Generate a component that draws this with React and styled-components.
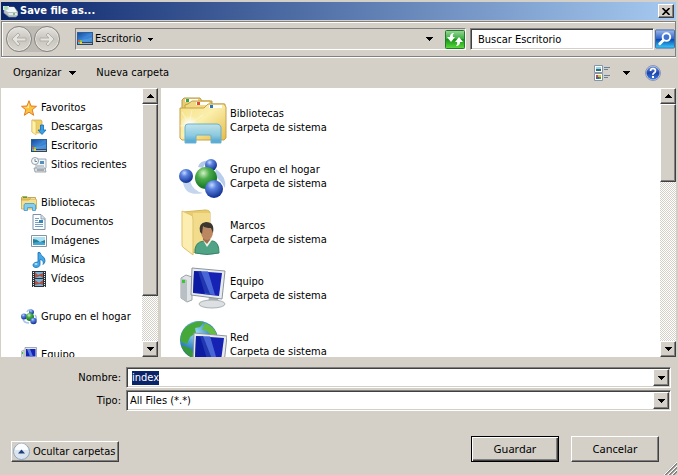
import React, { useEffect, useRef } from 'react';
import styled, { createGlobalStyle, css } from 'styled-components';

const GlobalStyle = createGlobalStyle`
  * {
    box-sizing: border-box;
  }
  body {
    margin: 0;
    background: #d4d0c8;
  }
  body,
  button,
  input,
  select {
    font-family: 'DejaVu Sans Condensed', 'Noto Sans', sans-serif;
    font-size: 11px;
    line-height: 14px;
    color: #000000;
  }
  svg {
    display: block;
    flex: none;
  }
`;

const raised = css`
  border: 1px solid;
  border-color: #ffffff #404040 #404040 #ffffff;
  box-shadow: inset -1px -1px #808080;
  background: #d4d0c8;
`;

const sunken = css`
  border: 1px solid;
  border-color: #808080 #ffffff #ffffff #808080;
  box-shadow: inset 1px 1px #404040, inset -1px -1px #d4d0c8;
  background: #ffffff;
`;

const Dialog = styled.div`
  display: flex;
  flex-direction: column;
  height: 100vh;
  min-height: 320px;
  padding: 2px 2px 0 1px;
  background: #d4d0c8;
`;

const TitleBar = styled.header`
  display: flex;
  align-items: center;
  gap: 2px;
  height: 18px;
  padding: 0 2px 0 1px;
  background: linear-gradient(to right, #0a246a, #a6caf0);

  h1 {
    flex: 1;
    margin: 0;
    color: #ffffff;
    font-size: 11px;
    font-weight: bold;
  }
`;

const CloseButton = styled.button`
  ${raised}
  display: flex;
  align-items: center;
  justify-content: center;
  width: 16px;
  height: 14px;
  padding: 0;
`;

const NavBar = styled.nav`
  display: flex;
  align-items: center;
  height: 36px;
  margin-top: 1px;
  padding-left: 4px;
  border: 1px solid #808080;
  box-shadow: inset 1px 1px #ffffff, 0 1px #ffffff;
`;

const HistoryButtons = styled.div`
  display: flex;
  gap: 2px;
  margin-right: 15px;
  border-radius: 13px;
  background: #bebbb5;
`;

const RoundButton = styled.button`
  width: 26px;
  height: 26px;
  padding: 0;
  border: 1px solid #85837f;
  border-radius: 50%;
  background: linear-gradient(#e6e4df, #c8c5bf 50%, #dad7d0);
  box-shadow: inset 0 0 0 1px #e8e6e2;
`;

const AddressBar = styled.div`
  display: flex;
  flex: 1;
  align-items: center;
  height: 22px;
  padding-left: 1px;
  border: 1px solid;
  border-color: #808080 #ffffff #ffffff #808080;
`;

const PlainButton = styled.button`
  display: flex;
  align-items: center;
  gap: ${({ $gap }) => $gap || 0}px;
  padding: 0;
  border: 0;
  background: none;
`;

const Spacer = styled.div`
  flex: 1;
`;

const RefreshButton = styled(PlainButton)`
  margin-left: 12px;
`;

const SearchBox = styled.form`
  display: flex;
  align-items: center;
  gap: 1px;
  width: 205px;
  margin-left: 4px;

  input {
    flex: 1;
    min-width: 0;
    height: 22px;
    padding: 0 7px;
    ${sunken}
  }
  input::placeholder {
    color: #000000;
  }
`;

const Toolbar = styled.div`
  display: flex;
  align-items: center;
  height: 31px;
  padding: 0 15px 0 12px;
`;

const MainCommands = styled.div`
  display: flex;
  flex: 1;
  gap: 20px;
`;

const ViewCommands = styled.div`
  display: flex;
  align-items: center;
  gap: 15px;
`;

const Panes = styled.div`
  display: flex;
  flex: 1;
  gap: 3px;
  min-height: 0;
`;

const Pane = styled.section`
  display: flex;
  flex: ${({ $width }) => ($width ? `0 0 ${$width}px` : 1)};
  min-width: 0;
  background: #ffffff;
`;

const Tree = styled.ul`
  flex: 1;
  margin: 0;
  padding: 10px 0 0 20px;
  overflow: hidden;
  list-style: none;

  ul {
    margin: 0;
    padding: 0 0 0 10px;
    list-style: none;
  }
  > li {
    margin-bottom: 19px;
  }
`;

const TreeLink = styled.a`
  display: flex;
  align-items: center;
  gap: 4px;
  height: 19px;
  color: #000000;
  text-decoration: none;
  white-space: nowrap;
`;

const FileList = styled.ul`
  flex: 1;
  margin: 0;
  padding: 4px 0 0 18px;
  overflow: hidden;
  list-style: none;
`;

const FileItem = styled.li`
  display: flex;
  align-items: center;
  gap: 3px;
  height: 56px;
`;

const FileText = styled.div`
  padding-top: 2px;

  p {
    margin: 0;
  }
`;

const ScrollBar = styled.div`
  display: flex;
  flex-direction: column;
  width: 16px;
  background: repeating-conic-gradient(#ffffff 0 25%, #d4d0c8 0 50%) 0 0 / 2px 2px;
`;

const ArrowButton = styled.button`
  ${raised}
  display: flex;
  flex: none;
  align-items: center;
  justify-content: center;
  width: 16px;
  height: 16px;
  padding: 0;
`;

const Track = styled.div`
  flex: 1;
`;

const Thumb = styled.div`
  ${raised}
  height: ${({ $shown }) => $shown}%;
`;

const Fields = styled.form`
  display: grid;
  grid-template-columns: 120px 1fr;
  gap: 2px 5px;
  align-items: center;
  padding: 10px 5px 0 0;

  label {
    padding-top: 1px;
    text-align: right;
  }
`;

const ComboBox = styled.div`
  ${sunken}
  display: flex;
  height: 21px;
  padding: 1px;

  input,
  select {
    flex: 1;
    min-width: 0;
    padding: 0 0 0 4px;
    border: 0;
    outline: 0;
    background: none;
    appearance: none;
  }
  select {
    padding: 1px 0 0 2px;
  }
  input::selection {
    background: #0a246a;
    color: #ffffff;
  }
`;

const DropArrow = styled.span`
  ${raised}
  display: flex;
  align-items: center;
  justify-content: center;
  width: 16px;
  pointer-events: none;
`;

const Footer = styled.footer`
  display: flex;
  align-items: flex-end;
  gap: 12px;
  height: 64px;
  padding: 0 17px 13px 10px;
  position: relative;
`;

const HideButton = styled.button`
  ${raised}
  display: flex;
  align-items: center;
  gap: 3px;
  height: 21px;
  padding: 0 3px 0 1px;
`;

const ActionButton = styled.button`
  ${raised}
  width: 88px;
  height: 26px;
  padding: 0;
  font-family: 'Noto Sans', sans-serif;
  ${({ $primary }) =>
    $primary &&
    css`
      border-color: #000000;
      box-shadow: inset 1px 1px #ffffff, inset -1px -1px #404040, inset -2px -2px #808080;
    `}
`;

const Grip = styled.svg`
  position: absolute;
  right: -1px;
  bottom: 0;
`;

const Triangle = ({ up, small }) => (
  <svg width={small ? 5 : 7} height={small ? 3 : 4} viewBox="0 0 7 4" shapeRendering="crispEdges">
    <path d={up ? 'M0 4 3.5 0 7 4z' : 'M0 0h7L3.5 4z'} />
  </svg>
);

const BackArrow = ({ flip }) => (
  <svg width="24" height="24" viewBox="0 0 24 24">
    <path
      d="M5 12l6-6 2 2-3 3h9v3h-9l3 3-2 2z"
      transform={flip ? 'matrix(-1 0 0 1 24 0)' : undefined}
      fill="#e6e4df"
      stroke="#b2afa9"
      strokeWidth="1"
    />
  </svg>
);

const DriveIcon = () => (
  <svg width="16" height="16" viewBox="0 0 16 16">
    <path d="M2 6 5 4h7l4 5v3l-2 2H7L2 10z" fill="#b9c1c8" stroke="#87929b" strokeWidth=".6" />
    <path d="M2 6 5 4h7l3 5H6z" fill="#f2f5f7" />
    <path d="M6 10h9v2H7z" fill="#e4e8eb" />
    <path d="M1 3h6v4H1z" fill="#cfe8f3" />
    <circle cx="4" cy="5" r="2" fill="#a9d7a1" />
    <circle cx="12" cy="11" r="1" fill="#54b34b" />
  </svg>
);

const DesktopIcon = () => (
  <svg width="16" height="16" viewBox="0 0 16 16">
    <defs>
      <linearGradient id="desk" x2="1" y2="1">
        <stop offset="0" stopColor="#174da0" />
        <stop offset=".55" stopColor="#3f87d8" />
        <stop offset="1" stopColor="#2a66b8" />
      </linearGradient>
    </defs>
    <path d="M0 1h16v13H0z" fill="#2c5f9e" />
    <path d="M1 2h14v9H1z" fill="url(#desk)" />
    <path d="M1 9q7 1 14-3v5H1z" fill="#5ba6ea" opacity=".6" />
    <path d="M0 11h16v3H0z" fill="#33475c" />
    <path d="M5 12h10v1H5z" fill="#9fb0c0" />
    <path d="M1 9h2v2H1z" fill="#f05a28" />
    <path d="M3 9h2v2H3z" fill="#79c64b" />
    <path d="M1 11h2v2H1z" fill="#45b9ec" />
    <path d="M3 11h2v2H3z" fill="#f6cc3c" />
  </svg>
);

const RefreshIcon = () => (
  <svg width="20" height="19" viewBox="0 0 20 19">
    <defs>
      <linearGradient id="refresh" x2="0" y2="1">
        <stop offset="0" stopColor="#9ad79a" />
        <stop offset=".45" stopColor="#3fae41" />
        <stop offset=".5" stopColor="#159419" />
        <stop offset="1" stopColor="#5edc3d" />
      </linearGradient>
    </defs>
    <rect x=".5" y=".5" width="19" height="18" rx="1" fill="url(#refresh)" stroke="#237a2a" />
    <path d="M9 3Q5 3 5 7H2l4 5 4-5H8q-1-2 1-4z" fill="#ffffff" />
    <path d="M11 16q4 0 4-4h3l-4-5-4 5h2q1 2-1 4z" fill="#ffffff" />
  </svg>
);

const SearchIcon = () => (
  <svg width="20" height="20" viewBox="0 0 21 20">
    <defs>
      <linearGradient id="search" x2="0" y2="1">
        <stop offset="0" stopColor="#9fb9ea" />
        <stop offset=".48" stopColor="#3265c9" />
        <stop offset=".5" stopColor="#0b43ad" />
        <stop offset="1" stopColor="#35d0fb" />
      </linearGradient>
    </defs>
    <rect x=".5" y=".5" width="20" height="19" rx="1" fill="url(#search)" stroke="#3b68b4" />
    <path d="M9 11l-4 4" stroke="#ffffff" strokeWidth="3" strokeLinecap="round" />
    <circle cx="12" cy="8" r="4" fill="#3f74d3" stroke="#ffffff" strokeWidth="2" />
  </svg>
);

const ViewIcon = () => (
  <svg width="17" height="16" viewBox="0 0 17 16">
    <path d="M.5.5h8v7h-8zM.5 8.500h8v7h-8z" fill="#ffffff" stroke="#8395a8" />
    <path d="M2 2h5v2H2z" fill="#9bd4ee" />
    <path d="M2 4h5v2H2z" fill="#2a6f70" />
    <path d="M2 10h2v2H2z" fill="#d7432d" />
    <path d="M4 10h3v2H4z" fill="#eebb25" />
    <path d="M2 12h3v2H2z" fill="#3262ba" />
    <path d="M5 12h2v2H5z" fill="#36a541" />
    <path d="M10 2.500h6M10 4.500h4M10 10.500h6M10 12.500h4" stroke="#6780a0" />
  </svg>
);

const HelpIcon = () => (
  <svg width="16" height="16" viewBox="0 0 16 16">
    <defs>
      <linearGradient id="help" x2="0" y2="1">
        <stop offset="0" stopColor="#6f92e0" />
        <stop offset=".5" stopColor="#1c43ac" />
        <stop offset="1" stopColor="#3e7be0" />
      </linearGradient>
    </defs>
    <circle cx="8" cy="8" r="7.500" fill="#c3cde2" stroke="#8a97b0" />
    <circle cx="8" cy="8" r="6.500" fill="url(#help)" />
    <path d="M5.500 6q0-2.500 2.500-2.500T10.500 6q0 1-1.500 2T8 10" fill="none" stroke="#ffffff" strokeWidth="1.600" />
    <path d="M7 11h2v2H7z" fill="#ffffff" />
  </svg>
);

const StarIcon = () => (
  <svg width="16" height="16" viewBox="0 0 16 16">
    <path d="M8 .7 10 6l5.500.3-4.300 3.500 1.500 5.500L8 12.200l-4.700 3.100 1.500-5.500L.5 6.300 6 6z" fill="#fbc344" stroke="#e47d22" />
    <path d="M8 3v5L3 7.200l3.500-.3z" fill="#fff0a5" />
  </svg>
);

const DownloadsIcon = () => (
  <svg width="16" height="16" viewBox="0 0 16 16">
    <path d="M1 1h9l1 1v12H3l-2-1z" fill="#edd06a" stroke="#d1a844" strokeWidth=".7" />
    <path d="M1 1l4 2v13l-4-3z" fill="#fff1a8" stroke="#d9b650" strokeWidth=".6" />
    <path d="M9.500 6h3v5H15l-4 4.500L7 11h2.500z" fill="#36a1ea" stroke="#1769ad" strokeWidth=".8" />
  </svg>
);

const RecentIcon = () => (
  <svg width="16" height="16" viewBox="0 0 16 16">
    <path d="M5 2h10v9l-1 1H5z" fill="#f0f4f7" stroke="#8698a8" strokeWidth=".8" />
    <path d="M9 4h4v3H9z" fill="#5590bd" />
    <path d="M6 9h7" stroke="#8aa0b1" />
    <path d="M3 11h11l1 4H4z" fill="#dbe0e3" stroke="#8d979f" strokeWidth=".8" />
    <path d="M6 13h7" stroke="#6b7880" />
    <circle cx="4" cy="4" r="3.500" fill="#f7f9fa" stroke="#7b8f9f" strokeWidth=".8" />
    <path d="M4 2v2.500h2" fill="none" stroke="#5a6c7a" strokeWidth=".8" />
  </svg>
);

const LibrarySmallIcon = () => (
  <svg width="16" height="16" viewBox="0 0 16 16">
    <path d="M.5 4V2.500l1-1H6l1 1h7.500V6H.5z" fill="#e3c463" stroke="#b8983f" strokeWidth=".8" />
    <path d="M2 2h4v1H2z" fill="#3fa358" />
    <path d="M10 3h4v1h-4z" fill="#ffffff" />
    <path d="M.5 5h7.500l1-1h6l.5 1v9H.5z" fill="#f6e08d" stroke="#cda648" strokeWidth=".8" />
    <path d="M3 15.500V10l1-1.500h9l1.500 1.500v5.500h-3V12.500h-5v3z" fill="#86cdec" stroke="#3f98ca" strokeWidth=".8" />
  </svg>
);

const LibraryIcon = () => (
  <svg width="48" height="48" viewBox="0 0 48 48">
    <defs>
      <linearGradient id="folder" x2="1" y2="1">
        <stop offset="0" stopColor="#f3df83" />
        <stop offset=".45" stopColor="#fbefad" />
        <stop offset="1" stopColor="#e3bd4b" />
      </linearGradient>
      <linearGradient id="stand" x2="0" y2="1">
        <stop offset="0" stopColor="#bfe3ee" />
        <stop offset=".6" stopColor="#83c9e9" />
        <stop offset="1" stopColor="#3e9bd2" />
      </linearGradient>
      <radialGradient id="flare">
        <stop offset="0" stopColor="#ffffff" />
        <stop offset="1" stopColor="#ffffff" stopOpacity="0" />
      </radialGradient>
    </defs>
    <path d="M3 12V4l2-2h16l2 3h10v9H3z" fill="#e8cc73" stroke="#b99b49" />
    <path d="M6 3h13v3H6z" fill="#ffffff" />
    <path d="M7 3h3v3H7z" fill="#30a354" />
    <path d="M6 15V9l3-1 4-3h18l2 3h13v9H6z" fill="#f0d980" stroke="#c0a14c" />
    <path d="M17 6h13v3H17z" fill="#ffffff" />
    <path d="M18 6h3v3h-3z" fill="#e34a32" />
    <path d="M1 12h24l4-4h16l2 3v31l-2 2H3l-2-2z" fill="url(#folder)" stroke="#c7a24b" />
    <path d="M30 9h13v3H30z" fill="#ffffff" />
    <path d="M31 9h3v3h-3z" fill="#2878c8" />
    <circle cx="10" cy="28" r="9" fill="url(#flare)" />
    <path d="M10 28 3 16M10 28 13 14M10 28 1 30M10 28 24 19M10 28 4 41" stroke="#fffbe2" opacity=".6" />
    <path
      d="M6 31q0-3 3-3h29q3 0 4 3v16H32v-7q0-1-1-1H18q-1 0-1 1v7H6z"
      fill="url(#stand)"
      stroke="#5faed2"
      opacity=".92"
    />
  </svg>
);

const HomegroupSmallIcon = () => (
  <svg width="16" height="16" viewBox="0 0 16 16">
    <path d="M6 3q1-3 5-2M2 10q1 4 6 4M14 6q2 2 1 5" fill="none" stroke="#a9c4ea" strokeWidth="1.500" />
    <circle cx="10.500" cy="3" r="2.500" fill="url(#blueBall)" />
    <circle cx="3" cy="7.500" r="3" fill="url(#blueBall)" />
    <circle cx="9" cy="8" r="4" fill="url(#greenBall)" />
    <circle cx="12.500" cy="12" r="3.200" fill="url(#blueBall)" />
  </svg>
);

const HomegroupIcon = () => (
  <svg width="48" height="48" viewBox="0 0 48 48">
    <defs>
      <radialGradient id="blueBall" cx=".38" cy=".28" r=".7">
        <stop offset="0" stopColor="#c5d9ff" />
        <stop offset=".35" stopColor="#5c83df" />
        <stop offset="1" stopColor="#153495" />
      </radialGradient>
      <radialGradient id="greenBall" cx=".38" cy=".28" r=".7">
        <stop offset="0" stopColor="#d2f2c2" />
        <stop offset=".4" stopColor="#4bac4b" />
        <stop offset="1" stopColor="#127322" />
      </radialGradient>
    </defs>
    <g transform="translate(0 4)">
      <path d="M19 11q2-8 16-6-9 0-11 7z" fill="#b3c8e8" />
      <path d="M4 26q2 15 20 11-10-2-13-12z" fill="#c4d5ed" />
      <path d="M37 13q11 8 9 19-4-8-11-12z" fill="#b9cdec" />
      <circle cx="32" cy="9" r="6" fill="url(#blueBall)" />
      <circle cx="7" cy="20" r="7" fill="url(#blueBall)" />
      <circle cx="27" cy="22" r="11" fill="url(#greenBall)" />
      <circle cx="35" cy="33" r="9" fill="url(#blueBall)" />
    </g>
  </svg>
);

const UserIcon = () => (
  <svg width="48" height="48" viewBox="0 0 48 48">
    <path d="M4 4 26 2q5 0 5 3v36L13 45 4 39z" fill="#e9cb6b" stroke="#d3b75e" />
    <path d="M14 5h17v36H14z" fill="#f2dc8c" />
    <path d="M3 3l9 4q2 1 2 4v36L5 40q-2-1-2-3z" fill="#fcedb1" stroke="#dec36d" />
    <path d="M16 45q-1-11 9-12h9q6 1 6 12-12 3-24 0z" fill="#50a485" stroke="#388368" />
    <path d="M24 32l4 7 5-7" fill="#f2f4f0" />
    <path d="M24 27h7v5l-3 4-4-4z" fill="#a06f49" />
    <ellipse cx="28" cy="24" rx="6" ry="8" fill="#ba8760" />
    <path d="M21 24q-2-9 6-10 9 0 7 11l-2-5q-6 0-8-2l-1 8z" fill="#3c3630" />
  </svg>
);

const Screen = () => (
  <>
    <path d="M30 32l9 1 1 6-11-1z" fill="#a9b0b4" />
    <ellipse cx="33" cy="39" rx="13" ry="4" fill="#dce0e2" stroke="#aab0b4" />
    <path d="M13 3l33 3-3 28-31-4z" fill="#e8ebed" stroke="#8d969d" />
    <path d="M15 6l28 2-3 23-26-3z" fill="#1622b4" />
    <path d="M19 6h10l7 24-10-1z" fill="#5a7de2" opacity=".75" />
    <path d="M15 6h7l9 23-17-2z" fill="#071896" opacity=".6" />
  </>
);

const ComputerSmallIcon = () => (
  <svg width="16" height="16" viewBox="0 0 16 16">
    <path d="M.5 4 3 3v10l-2.500-1z" fill="#d5dade" stroke="#9ba3a8" strokeWidth=".6" />
    <path d="M1 5h1v2H1z" fill="#37ca30" />
    <path d="M4 .5h11.500v10H4z" fill="#e4e8eb" stroke="#8d969d" strokeWidth=".8" />
    <path d="M5 2h9.500v7.500H5z" fill="#1424b6" />
    <path d="M6 2h3l3 7.500H9z" fill="#5a7de2" />
    <path d="M7 12h6v2H7z" fill="#aab0b4" />
  </svg>
);

const ComputerIcon = () => (
  <svg width="48" height="48" viewBox="0 0 48 48">
    <g transform="translate(0 1)">
      <path d="M2 13l5-3 6 2v23l-5 2-6-4z" fill="#dfe3e5" stroke="#9ba3a8" />
      <path d="M2 13l6 2v22l-6-4z" fill="#b9c0c5" />
      <path d="M3 15h3v3H3z" fill="#37ca30" />
      <Screen />
    </g>
  </svg>
);

const NetworkIcon = () => (
  <svg width="48" height="48" viewBox="0 0 48 48">
    <defs>
      <radialGradient id="globe" cx=".4" cy=".3" r=".7">
        <stop offset="0" stopColor="#9edcf7" />
        <stop offset=".6" stopColor="#3587c9" />
        <stop offset="1" stopColor="#185694" />
      </radialGradient>
    </defs>
    <circle cx="20" cy="20" r="19" fill="url(#globe)" />
    <path d="M8 6q9-6 17-4l-4 5-5 1 1 5-6 4-3 7-6-2q-2-9 6-16z" fill="#47a83a" />
    <path d="M26 3q9 3 12 12l-5 1-5-5-5-1z" fill="#67bd42" />
    <path d="M2 25l9 3 5 8-2 2q-9-4-12-13z" fill="#36973b" />
    <g transform="translate(2 10)">
      <Screen />
    </g>
  </svg>
);

const DocumentIcon = () => (
  <svg width="16" height="16" viewBox="0 0 16 16">
    <path d="M2 .5h8l4 4v11H2z" fill="#fcfdff" stroke="#7e91a5" />
    <path d="M10 1v4h4" fill="#d9e2ec" stroke="#7e91a5" strokeWidth=".8" />
    <path d="M4 4.500h4M4 6.500h3M4 8.500h4M4 10.500h8M4 12.500h8" stroke="#7a9ec2" />
    <path d="M8 6h4v3H8z" fill="#3486b6" />
  </svg>
);

const PictureIcon = () => (
  <svg width="16" height="16" viewBox="0 0 16 16">
    <path d="M.5 2.500h15v11H.5z" fill="#ffffff" stroke="#87939e" />
    <path d="M2 4h12v8H2z" fill="#a9e0f6" />
    <path d="M2 6q4 0 7 3l5-2v3H2z" fill="#287e93" />
    <path d="M2 10q7-2 12 0v2H2z" fill="#43a7d5" />
  </svg>
);

const MusicIcon = () => (
  <svg width="16" height="16" viewBox="0 0 16 16">
    <path
      d="M7 .5h2c0 3 5 4 5 8 0 2-1 3-2 4 1-3-1-5-3-5v5c0 2-2 3-4 3s-3-1-3-2.500S4 10 7 10z"
      fill="#42a8e6"
      stroke="#176bb3"
      strokeWidth=".8"
    />
    <ellipse cx="5" cy="12" rx="1.500" ry="1" fill="#b0e0fa" />
  </svg>
);

const VideoIcon = () => (
  <svg width="16" height="16" viewBox="0 0 16 16">
    <path d="M1 0h14v16H1z" fill="#28343b" />
    <path d="M4 1h8v6H4zM4 8h8v7H4z" fill="#74b5e0" />
    <path d="M4 1l3 3 5-2v5L9 5 4 7zM4 9l4 3 4-3v5l-3-1-5 1z" fill="#b5533f" />
    <path d="M2.500 1v15M13.500 1v15" stroke="#e8eff2" strokeDasharray="1 1" />
  </svg>
);

const UpCircle = () => (
  <svg width="17" height="17" viewBox="0 0 17 17">
    <circle cx="8.500" cy="8.500" r="8" fill="#dbe5f0" stroke="#8fa4bb" />
    <path d="M2 7a6.500 6.500 0 0 1 13 0z" fill="#fafcfe" />
    <path d="M5 10.500 8.500 6.500l3.500 4z" fill="#1f3f7c" />
  </svg>
);

const tree = [
  {
    name: 'Favoritos',
    Icon: StarIcon,
    children: [
      { name: 'Descargas', Icon: DownloadsIcon },
      { name: 'Escritorio', Icon: DesktopIcon },
      { name: 'Sitios recientes', Icon: RecentIcon },
    ],
  },
  {
    name: 'Bibliotecas',
    Icon: LibrarySmallIcon,
    children: [
      { name: 'Documentos', Icon: DocumentIcon },
      { name: 'Imágenes', Icon: PictureIcon },
      { name: 'Música', Icon: MusicIcon },
      { name: 'Vídeos', Icon: VideoIcon },
    ],
  },
  { name: 'Grupo en el hogar', Icon: HomegroupSmallIcon },
  { name: 'Equipo', Icon: ComputerSmallIcon },
];

const files = [
  { name: 'Bibliotecas', Icon: LibraryIcon },
  { name: 'Grupo en el hogar', Icon: HomegroupIcon },
  { name: 'Marcos', Icon: UserIcon },
  { name: 'Equipo', Icon: ComputerIcon },
  { name: 'Red', Icon: NetworkIcon },
];

const TreeNode = ({ name, Icon, children }) => (
  <li>
    <TreeLink href="#">
      <Icon />
      {name}
    </TreeLink>
    {children && (
      <ul>
        {children.map((child) => (
          <TreeNode key={child.name} {...child} />
        ))}
      </ul>
    )}
  </li>
);

const Scroller = ({ shown }) => (
  <ScrollBar>
    <ArrowButton aria-label="Subir">
      <Triangle up />
    </ArrowButton>
    <Track>
      <Thumb $shown={shown} />
    </Track>
    <ArrowButton aria-label="Bajar">
      <Triangle />
    </ArrowButton>
  </ScrollBar>
);

const App = () => {
  const nameRef = useRef(null);

  useEffect(() => {
    nameRef.current.focus();
    nameRef.current.select();
  }, []);

  return (
    <>
      <GlobalStyle />
      <Dialog role="dialog" aria-labelledby="title">
        <TitleBar>
          <DriveIcon />
          <h1 id="title">Save file as...</h1>
          <CloseButton aria-label="Cerrar">
            <svg width="8" height="7" viewBox="0 0 8 7">
              <path d="M.5 0l7 7M7.500 0l-7 7" stroke="#000000" strokeWidth="1.600" />
            </svg>
          </CloseButton>
        </TitleBar>

        <NavBar>
          <HistoryButtons>
            <RoundButton aria-label="Atrás">
              <BackArrow />
            </RoundButton>
            <RoundButton aria-label="Adelante">
              <BackArrow flip />
            </RoundButton>
          </HistoryButtons>
          <AddressBar>
            <PlainButton $gap={2}>
              <DesktopIcon />
              Escritorio
            </PlainButton>
            <PlainButton $gap={7} aria-label="Ubicaciones">
              <span />
              <Triangle small />
            </PlainButton>
            <Spacer />
            <PlainButton aria-label="Anteriores">
              <Triangle />
            </PlainButton>
            <RefreshButton aria-label="Actualizar">
              <RefreshIcon />
            </RefreshButton>
          </AddressBar>
          <SearchBox>
            <input type="text" aria-label="Buscar" placeholder="Buscar Escritorio" />
            <PlainButton type="button" aria-label="Iniciar búsqueda">
              <SearchIcon />
            </PlainButton>
          </SearchBox>
        </NavBar>

        <Toolbar>
          <MainCommands>
            <PlainButton $gap={8}>
              Organizar
              <Triangle />
            </PlainButton>
            <PlainButton>Nueva carpeta</PlainButton>
          </MainCommands>
          <ViewCommands>
            <PlainButton $gap={12} aria-label="Vistas">
              <ViewIcon />
              <Triangle />
            </PlainButton>
            <PlainButton aria-label="Ayuda">
              <HelpIcon />
            </PlainButton>
          </ViewCommands>
        </Toolbar>

        <Panes>
          <Pane $width={157}>
            <Tree>
              {tree.map((node) => (
                <TreeNode key={node.name} {...node} />
              ))}
            </Tree>
            <Scroller shown={81} />
          </Pane>
          <Pane>
            <FileList>
              {files.map(({ name, Icon }) => (
                <FileItem key={name}>
                  <Icon />
                  <FileText>
                    <p>{name}</p>
                    <p>Carpeta de sistema</p>
                  </FileText>
                </FileItem>
              ))}
            </FileList>
            <Scroller shown={33} />
          </Pane>
        </Panes>

        <Fields>
          <label htmlFor="name">Nombre:</label>
          <ComboBox>
            <input id="name" ref={nameRef} type="text" defaultValue="index" />
            <DropArrow>
              <Triangle />
            </DropArrow>
          </ComboBox>
          <label htmlFor="type">Tipo:</label>
          <ComboBox>
            <select id="type">
              <option>All Files (*.*)</option>
            </select>
            <DropArrow>
              <Triangle />
            </DropArrow>
          </ComboBox>
        </Fields>

        <Footer>
          <HideButton>
            <UpCircle />
            Ocultar carpetas
          </HideButton>
          <Spacer />
          <ActionButton $primary>Guardar</ActionButton>
          <ActionButton>Cancelar</ActionButton>
          <Grip width="13" height="13" viewBox="0 0 13 13">
            <path d="M1 13 13 1M5 13l8-8M9 13l4-4" stroke="#808080" strokeWidth="2" />
            <path d="M0 13 13 0M4 13l9-9M8 13l5-5" stroke="#ffffff" />
          </Grip>
        </Footer>
      </Dialog>
    </>
  );
};

export default App;
